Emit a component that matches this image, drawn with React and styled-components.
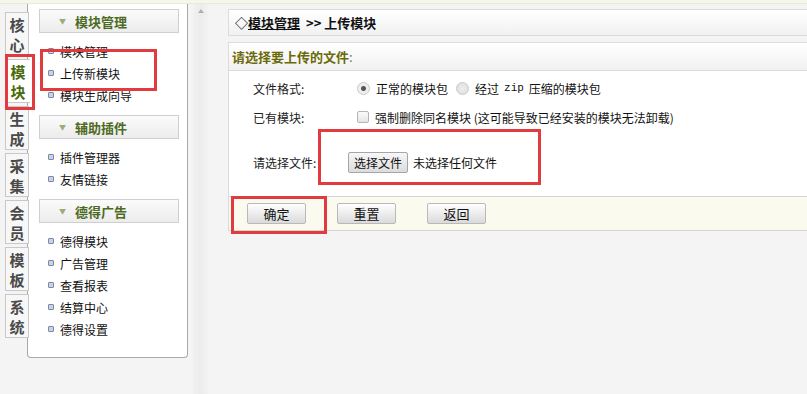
import React from "react"
import styled, { createGlobalStyle } from "styled-components"

const Global = createGlobalStyle`
  html, body {
    margin: 0;
    padding: 0;
    background: #f4f4f4;
    font-family: "Liberation Sans", "Noto Sans CJK SC", sans-serif;
    font-size: 12px;
    color: #222;
  }
`

const Page = styled.div`
  position: relative;
  width: 807px;
  height: 394px;
  overflow: hidden;
  background: #f4f4f4;
`

const TopStrip = styled.div`
  height: 3px;
  background: #f6f6e9;
  border-bottom: 1px solid #ecebd8;
`

const Body = styled.div`
  display: flex;
  align-items: flex-start;
`

// left vertical tabs
const TabColumn = styled.div`
  width: 23px;
  padding: 8px 0 0 5px;
  display: flex;
  flex-direction: column;
  gap: 3px;
  position: relative;
  z-index: 2;
`

const Tab = styled.div`
  height: 40px;
  width: ${p => (p.$active ? "24px" : "22px")};
  border: 1px solid #c8c8c8;
  border-right: ${p => (p.$active ? "none" : "1px solid #c8c8c8")};
  background: ${p => (p.$active ? "#fff" : "#f7f7f7")};
  color: ${p => (p.$active ? "#496b0c" : "#4a4a4a")};
  font-family: "Noto Sans CJK SC", sans-serif;
  font-size: 15px;
  font-weight: 700;
  line-height: 20px;
  padding-top: 2px;
  box-sizing: content-box;
  display: flex;
  flex-direction: column;
  align-items: center;
  overflow: hidden;
`

const SidePanel = styled.div`
  width: 161px;
  height: 354px;
  margin-left: -1px;
  background: #fff;
  border: 1px solid #a9a9a9;
  border-top: none;
  border-radius: 0 0 4px 4px;
  padding: 5px 0 0 11px;
  box-sizing: border-box;
`

const GroupHead = styled.div`
  width: 140px;
  height: 24px;
  box-sizing: border-box;
  border: 1px solid #cfcfcf;
  background: linear-gradient(#fbfbfb, #ececec);
  display: flex;
  align-items: center;
  padding-left: 19px;
  gap: 9px;
  color: #4d6a1e;
  font-family: "Noto Sans CJK SC", sans-serif;
  font-weight: 700;
  font-size: 13px;
`

const Chevron = styled.span`
  font-size: 7px;
  color: #9aab7c;
  width: 7px;
`

const ItemList = styled.ul`
  list-style: none;
  margin: 0;
  padding: 7px 0 9px 9px;
`

const Item = styled.li`
  height: 22px;
  display: flex;
  align-items: center;
  gap: 6px;
  font-family: "Noto Sans CJK SC", sans-serif;
  font-size: 12px;
  color: #111;
`

const Bullet = styled.span`
  width: 4px;
  height: 4px;
  border: 1px solid #7d8aa5;
  border-radius: 1px;
  background: #c9d1e2;
`

const ScrollTrack = styled.div`
  width: 16px;
  height: 391px;
  margin-left: 5px;
  background: linear-gradient(90deg, #f1f1f1, #ececec 50%, #f3f3f3);
  display: flex;
  justify-content: center;
  padding-top: 5px;
  box-sizing: border-box;
`

const UpArrow = styled.span`
  width: 0;
  height: 0;
  border-left: 3px solid transparent;
  border-right: 3px solid transparent;
  border-bottom: 4px solid #b0b0b0;
`

const Main = styled.div`
  flex: 1;
  padding: 5px 0 0 19px;
  min-width: 0;
`

const Wide = styled.div`
  width: 600px;
`

const Crumb = styled.div`
  height: 27px;
  box-sizing: border-box;
  border: 1px solid #dcdcdc;
  background: linear-gradient(#ffffff, #f1f1f1);
  display: flex;
  align-items: center;
  padding-left: 6px;
  font-family: "Noto Sans CJK SC", sans-serif;
  font-size: 13px;
  font-weight: 700;
  color: #111;
  gap: 6px;
`

const Link = styled.span`
  text-decoration: underline;
`

const FormBox = styled.div`
  margin-top: 6px;
  border: 1px solid #dcdcdc;
  border-bottom: none;
  background: #fff;
`

const FormHead = styled.div`
  height: 28px;
  box-sizing: border-box;
  border-bottom: 1px solid #dcdcdc;
  background: linear-gradient(#ffffff, #f1f1f1);
  display: flex;
  align-items: center;
  padding-left: 3px;
  font-family: "Noto Sans CJK SC", sans-serif;
  font-size: 13px;
`

const HeadText = styled.b`
  color: #6b6a08;
`

const Colon = styled.span`
  color: #777;
`

const FormBody = styled.div`
  padding: 5px 0 6px;
`

const Row = styled.div`
  display: grid;
  grid-template-columns: 119px 1fr;
  align-items: center;
  height: ${p => p.$h || 29}px;
`

const Label = styled.div`
  padding-left: 24px;
  font-family: "Noto Sans CJK SC", sans-serif;
  font-size: 12px;
  color: #222;
`

const Field = styled.div`
  display: flex;
  align-items: center;
  font-family: "Noto Sans CJK SC", sans-serif;
  font-size: 12px;
  color: #111;
  padding-left: ${p => p.$pad || 0}px;
`

const Radio = styled.span`
  width: 11px;
  height: 11px;
  border-radius: 50%;
  border: 1px solid #c9c9c9;
  background: radial-gradient(circle at 50% 50%, ${p => (p.$on ? "#555 0 2px, #eee 3px" : "#eee 0, #e2e2e2 5px")});
  margin-right: 6px;
  margin-left: ${p => p.$gap || 0}px;
`

const Check = styled.span`
  width: 10px;
  height: 10px;
  border: 1px solid #b5b5b5;
  border-radius: 2px;
  background: linear-gradient(#fafafa, #e6e6e6);
  margin-right: 6px;
`

const Mono = styled.span`
  font-family: "Liberation Mono", monospace;
  font-size: 11px;
  margin: 0 5px;
`

const FileButton = styled.span`
  height: 21px;
  box-sizing: border-box;
  padding: 0 5px;
  border: 1px solid #a6a6a6;
  border-radius: 2px;
  background: linear-gradient(#f7f7f7, #dcdcdc);
  display: inline-flex;
  align-items: center;
  margin-right: 5px;
`

const ButtonBar = styled.div`
  height: 35px;
  box-sizing: border-box;
  background: #fafaee;
  border-top: 1px solid #d6d6ce;
  border-bottom: 1px solid #d6d6ce;
  display: flex;
  align-items: center;
  padding-left: 18px;
  gap: 31px;
`

const Button = styled.span`
  width: 59px;
  height: 21px;
  box-sizing: border-box;
  border: 1px solid #b9b9b9;
  border-radius: 2px;
  background: linear-gradient(#ffffff, #dadada);
  display: flex;
  align-items: center;
  justify-content: center;
  font-family: "Noto Sans CJK SC", sans-serif;
  font-size: 13px;
  color: #111;
`

// red annotation frames laid over the screenshot
const Mark = styled.div`
  position: absolute;
  border: 3px solid #e23b3f;
  box-sizing: border-box;
  pointer-events: none;
  z-index: 5;
`

const groups = [
  { title: "模块管理", items: ["模块管理", "上传新模块", "模块生成向导"] },
  { title: "辅助插件", items: ["插件管理器", "友情链接"] },
  { title: "德得广告", items: ["德得模块", "广告管理", "查看报表", "结算中心", "德得设置"] },
]

const tabs = [["核", "心"], ["模", "块"], ["生", "成"], ["采", "集"], ["会", "员"], ["模", "板"], ["系", "统"]]

const App = () => {
  return (
    <Page>
      <Global />
      <TopStrip />
      <Body>
        <TabColumn>
          {tabs.map((t, i) => (
            <Tab key={i} $active={i === 1}>
              <span>{t[0]}</span>
              <span>{t[1]}</span>
            </Tab>
          ))}
        </TabColumn>
        <SidePanel>
          {groups.map(g => (
            <div key={g.title}>
              <GroupHead>
                <Chevron>▼</Chevron>
                {g.title}
              </GroupHead>
              <ItemList>
                {g.items.map(it => (
                  <Item key={it}>
                    <Bullet />
                    {it}
                  </Item>
                ))}
              </ItemList>
            </div>
          ))}
        </SidePanel>
        <ScrollTrack>
          <UpArrow />
        </ScrollTrack>
        <Main>
          <Wide>
            <Crumb>
              <span>◇<Link>模块管理</Link></span>
              <span>&gt;&gt; 上传模块</span>
            </Crumb>
            <FormBox>
              <FormHead>
                <HeadText>请选择要上传的文件</HeadText>
                <Colon>:</Colon>
              </FormHead>
              <FormBody>
                <Row $h={24}>
                  <Label>文件格式:</Label>
                  <Field $pad={9}>
                    <Radio $on />
                    正常的模块包
                    <Radio $gap={8} />
                    经过<Mono>zip</Mono>压缩的模块包
                  </Field>
                </Row>
                <Row $h={34}>
                  <Label>已有模块:</Label>
                  <Field $pad={9}>
                    <Check />
                    强制删除同名模块 (这可能导致已经安装的模块无法卸载)
                  </Field>
                </Row>
                <Row $h={56}>
                  <Label>请选择文件:</Label>
                  <Field>
                    <FileButton>选择文件</FileButton>
                    未选择任何文件
                  </Field>
                </Row>
              </FormBody>
              <ButtonBar>
                <Button>确定</Button>
                <Button>重置</Button>
                <Button>返回</Button>
              </ButtonBar>
            </FormBox>
          </Wide>
        </Main>
      </Body>
      <Mark style={{ left: 5, top: 54, width: 30, height: 56 }} />
      <Mark style={{ left: 40, top: 49, width: 117, height: 42 }} />
      <Mark style={{ left: 318, top: 129, width: 223, height: 56 }} />
      <Mark style={{ left: 231, top: 196, width: 96, height: 38 }} />
    </Page>
  )
}

export default App
